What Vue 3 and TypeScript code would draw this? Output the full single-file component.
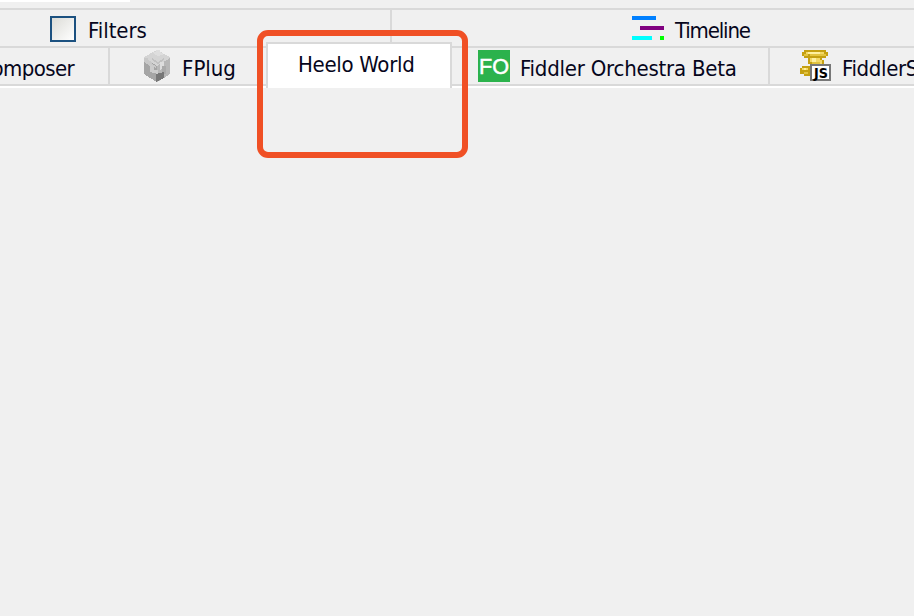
<script setup lang="ts">
interface Facet {
  points: string
  fill: string
}

const cube: Facet[] = [
  { points: '15,0 28,7 28,9 15,17 2,9 2,7', fill: '#d4d4d4' },
  { points: '2,8 15,16 15,32 8,28 2,24', fill: '#a5a5a5' },
  { points: '28,8 28,24 22,28 15,32 15,16', fill: '#b7b7b7' },
  { points: '14,0 18,0 18,2 22,4 16,6 12,4 10,2 14,2', fill: '#dedede' },
  { points: '2,8 6,8 6,10 10,12 10,14 14,16 14,18 8,16 2,12', fill: '#c8c8c8' },
  { points: '8,14 12,16 12,20 16,20 16,24 8,22', fill: '#cccccc' },
  { points: '18,12 22,12 22,18 18,20', fill: '#dddddd' },
  { points: '20,16 24,16 24,24 20,24', fill: '#aaaaaa' },
  { points: '14,24 22,22 22,28 18,30 14,32', fill: '#777777' },
  { points: '10,8 16,12 22,8 22,10 16,14 10,10', fill: '#c1c1c1' },
]
</script>

<template>
  <main class="panel">
    <div class="top-strip"><div class="strip-light"></div></div>
    <div class="row upper">
      <div class="tab filters"><span class="checkbox"></span><span class="label filters-label">Filters</span></div>
      <div class="tab timeline">
        <svg class="icon" width="32" height="26" viewBox="0 0 32 26" shape-rendering="crispEdges">
          <path fill="#0080ff" d="M0 0h24v4H0z" />
          <path fill="#800080" d="M8 10h24v4H8z" />
          <path fill="#00ffff" d="M0 20h20v4H0z" />
          <path fill="#00ff00" d="M28 20h4v4h-4z" />
        </svg>
        <span class="label timeline-label">Timeline</span>
      </div>
    </div>
    <div class="row lower">
      <div class="tab composer"><span class="label composer-label">Composer</span></div>
      <div class="tab fplug">
        <svg class="icon" width="32" height="32" viewBox="0 0 32 32" shape-rendering="crispEdges">
          <polygon v-for="(facet, i) in cube" :key="i" :points="facet.points" :fill="facet.fill" />
        </svg>
        <span class="label fplug-label">FPlug</span>
      </div>
      <div class="tab active"><span class="label hello-label">Heelo World</span></div>
      <div class="tab orchestra">
        <svg class="icon" width="32" height="32" viewBox="0 0 32 32">
          <rect width="32" height="32" fill="#2bb24c" />
          <text x="1" y="24" textLength="30" lengthAdjust="spacingAndGlyphs" font-family="Liberation Sans, sans-serif" font-size="22" fill="#fff" stroke="#fff" stroke-width=".5">FO</text>
        </svg>
        <span class="label orchestra-label">Fiddler Orchestra Beta</span>
      </div>
      <div class="tab script">
        <svg class="icon" width="32" height="32" viewBox="0 0 32 32" shape-rendering="crispEdges">
          <path fill="#c5a011" d="M4 0H26V2H28V6H26V8H22V10H24V14H26V18H12V24H10V26H4V24H0V18H2V16H10V14H8V8H4V6H2V2H4z" />
          <path fill="#f3d968" d="M6 2H24V4H6zM10 8H20V10H22V14H24V16H12V12H10zM2 18H8V20H2z" />
          <path fill="#e3c43f" d="M4 4H8V6H4zM10 4H26V6H10zM12 12H20V16H12zM4 22H8V24H4z" />
          <path fill="#fff0a0" d="M8 2H20V4H8zM12 8H16V12H12zM4 18H6V20H4z" />
          <rect x="11" y="15" width="19" height="15" fill="#fff" stroke="#777" stroke-width="2" />
          <text x="14" y="28" textLength="14" lengthAdjust="spacingAndGlyphs" font-family="DejaVu Sans, sans-serif" font-size="14" font-weight="bold" fill="#000">JS</text>
        </svg>
        <span class="label script-label">FiddlerScript</span>
      </div>
    </div>
    <div class="page-edge"></div>
    <div class="highlight"></div>
  </main>
</template>

<style>
body {
  margin: 0;
  background: #f0f0f0;
}
</style>

<style scoped>
.panel {
  position: relative;
  width: 914px;
  height: 616px;
  overflow: hidden;
  background: #f0f0f0;
  color: #06061c;
  font: 22px/26px "DejaVu Sans Condensed", "DejaVu Sans", sans-serif;
  font-stretch: condensed;
}
.top-strip {
  height: 8px;
}
.strip-light {
  width: 130px;
  height: 2px;
  background: #fff;
}
.row {
  display: grid;
  box-sizing: border-box;
  border-top: 2px solid #d9d9d9;
}
.upper {
  grid-template-columns: 392px 522px;
  grid-template-rows: 36px;
  height: 38px;
}
.lower {
  grid-template-columns: 110px 156px 186px 318px 144px;
  grid-template-rows: 36px;
  height: 40px;
  border-bottom: 2px solid #d9d9d9;
}
.tab {
  display: flex;
  box-sizing: border-box;
  min-width: 0;
  border-right: 2px solid #d9d9d9;
  white-space: nowrap;
}
.timeline,
.fplug,
.script {
  border-right: 0;
}
.icon {
  display: block;
  flex: none;
}
.label {
  font-stretch: condensed;
}
.filters {
  padding: 6px 0 0 50px;
}
.checkbox {
  box-sizing: border-box;
  width: 26px;
  height: 26px;
  border: 2px solid #1c5180;
  background: linear-gradient(135deg, #dcdcd7, #fff);
}
.filters-label {
  margin: 2px 0 0 12px;
  letter-spacing: -0.05px;
}
.timeline {
  padding: 6px 0 0 240px;
}
.timeline-label {
  margin: 2px 0 0 11px;
  letter-spacing: -1.15px;
}
.composer {
  justify-content: flex-end;
  padding: 8px 34px 0 0;
}
.composer-label {
  letter-spacing: -0.6px;
}
.fplug {
  padding: 2px 0 0 32px;
}
.fplug-label {
  margin: 6px 0 0 8px;
}
.active {
  height: 46px;
  margin-top: -6px;
  padding: 8px 0 0 30px;
  border: 2px solid #d9d9d9;
  border-bottom: 0;
  background: #fff;
  z-index: 1;
}
.hello-label {
  letter-spacing: -0.3px;
}
.orchestra {
  padding: 2px 0 0 26px;
}
.orchestra-label {
  margin: 6px 0 0 10px;
  letter-spacing: -0.22px;
}
.script {
  padding: 2px 0 0 30px;
}
.script-label {
  margin: 6px 0 0 10px;
  letter-spacing: -0.35px;
}
.page-edge {
  height: 2px;
  background: #fff;
}
.highlight {
  position: absolute;
  z-index: 2;
  left: 257px;
  top: 30px;
  box-sizing: border-box;
  width: 211px;
  height: 128px;
  border: 6px solid #f05025;
  border-radius: 11px;
}
</style>
